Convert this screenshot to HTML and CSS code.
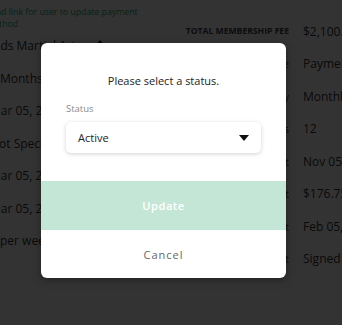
FILE: index.html
```html
<!DOCTYPE html>
<html lang="en">
<head>
<meta charset="utf-8">
<title>Select status</title>
<link rel="stylesheet" href="styles.css">
</head>
<body>
<div class="page">
  <div class="content">
    <div class="left">
      <div class="link">Send link for user to update payment method</div>
      <div class="lrow">Kids Martial Arts <svg class="sort" width="8" height="8" viewBox="0 0 8 8"><path d="M4 0 L7.5 4 L4 8 L0.5 4 Z" fill="#222"/></svg></div>
      <div class="lrow">6 Months</div>
      <div class="lrow">Mar 05, 2020</div>
      <div class="lrow">Not Specified</div>
      <div class="lrow">Mar 05, 2020</div>
      <div class="lrow">Mar 05, 2020</div>
      <div class="lrow">2 per week</div>
    </div>
    <div class="right">
      <div class="rrow"><span class="lbl lbl-strong">TOTAL MEMBERSHIP FEE</span><span class="val">$2,100.00</span></div>
      <div class="rrow"><span class="lbl">Payment Type</span><span class="val">Payment Plan</span></div>
      <div class="rrow"><span class="lbl">Billing Frequency</span><span class="val">Monthly</span></div>
      <div class="rrow"><span class="lbl">Number of Payments</span><span class="val">12</span></div>
      <div class="rrow"><span class="lbl">First Payment</span><span class="val">Nov 05, 2019</span></div>
      <div class="rrow"><span class="lbl">Payment Amount</span><span class="val">$176.75</span></div>
      <div class="rrow"><span class="lbl">Next Payment</span><span class="val">Feb 05, 2020</span></div>
      <div class="rrow"><span class="lbl">Contract</span><span class="val">Signed</span></div>
    </div>
  </div>
  <div class="overlay"></div>
  <div class="modal">
    <div class="modal-body">
      <div class="title">Please select a status.</div>
      <div class="field-label">Status</div>
      <div class="select">
        <span class="select-value">Active</span>
        <svg class="caret" width="10" height="6" viewBox="0 0 10 6"><path d="M0 0 H10 L5 6 Z" fill="#111"/></svg>
      </div>
    </div>
    <div class="btn btn-update">Update</div>
    <div class="btn btn-cancel">Cancel</div>
  </div>
</div>
</body>
</html>
```
FILE: styles.css
```css
html, body {
  margin: 0;
  padding: 0;
  background: #ffffff;
}
body {
  font-family: "Open Sans", "Liberation Sans", sans-serif;
}
.page {
  position: relative;
  width: 342px;
  height: 325px;
  overflow: hidden;
  background: #ffffff;
}
.content {
  display: flex;
  align-items: flex-start;
}
.left {
  width: 150px;
  flex: none;
  color: #333333;
}
.link {
  margin-left: -14px;
  width: 160px;
  padding-top: 6px;
  font-size: 8.75px;
  line-height: 12px;
  color: #22a86a;
}
.lrow {
  margin-left: -10px;
  font-size: 12px;
  line-height: 32.5px;
  white-space: nowrap;
  display: flex;
  align-items: center;
}
.sort {
  margin-left: 14px;
  margin-top: -4px;
}
.right {
  width: 192px;
  flex: none;
  padding-top: 15px;
}
.rrow {
  display: grid;
  grid-template-columns: 139px 1fr;
  column-gap: 14px;
  align-items: center;
  height: 32.5px;
  white-space: nowrap;
}
.lbl {
  text-align: right;
  font-size: 11px;
  color: #444444;
  overflow: hidden;
}
.lbl-strong {
  font-size: 8.6px;
  font-weight: 700;
  color: #444444;
}
.val {
  font-size: 12px;
  color: #333333;
}
.overlay {
  position: absolute;
  z-index: 1;
  top: 0;
  left: 0;
  width: 100%;
  height: 100%;
  background: rgba(0, 0, 0, 0.8);
}
.modal {
  position: absolute;
  z-index: 2;
  left: 41px;
  top: 43px;
  width: 245px;
  background: #ffffff;
  border-radius: 6px;
  overflow: hidden;
  box-shadow: 0 2px 8px rgba(0, 0, 0, 0.35);
}
.modal-body {
  padding: 30px 25px 28px 25px;
}
.title {
  font-size: 11px;
  line-height: 16px;
  text-align: center;
  color: #222222;
}
.field-label {
  margin-top: 13px;
  font-size: 9.5px;
  line-height: 14px;
  color: #8a8a8a;
}
.select {
  margin-top: 6px;
  height: 31px;
  box-sizing: border-box;
  padding: 0 12px;
  display: flex;
  align-items: center;
  justify-content: space-between;
  border-radius: 5px;
  background: #ffffff;
  box-shadow: 0 1px 4px rgba(0, 0, 0, 0.18);
}
.select-value {
  font-size: 11px;
  color: #222222;
}
.btn {
  display: flex;
  align-items: center;
  justify-content: center;
  font-size: 11px;
}
.btn-update {
  height: 49px;
  background: #c3e6d6;
  color: #ffffff;
  font-weight: 600;
  letter-spacing: 0.6px;
}
.btn-cancel {
  height: 48px;
  color: #666666;
  letter-spacing: 1px;
}
```
